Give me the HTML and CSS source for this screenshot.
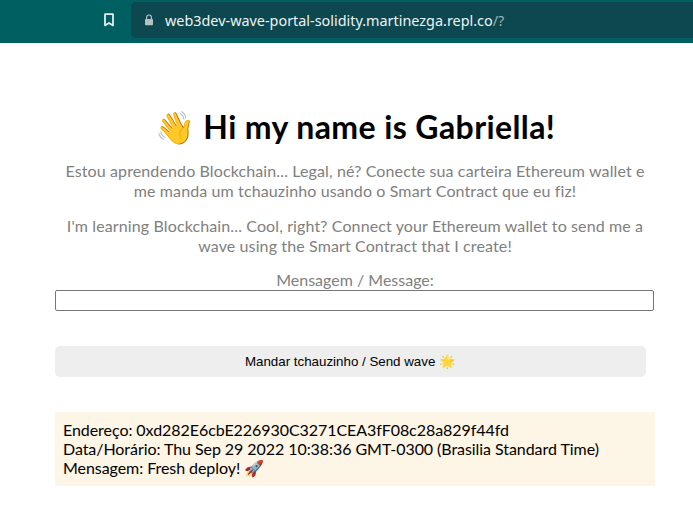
FILE: index.html
```html
<!DOCTYPE html>
<html lang="en">
<head>
    <meta charset="UTF-8">
    <title>Wave Portal</title>
    <meta name="viewport" content="width=device-width, initial-scale=1.0">
    <link rel="stylesheet" href="styles.css">
</head>
<body>

<nav class="toolbar">
    <svg class="bookmark" width="12" height="14" viewBox="0 0 12 14">
        <path d="M2 1.2h8v11.2l-4-2.4-4 2.4z" fill="none" stroke="#e4eeee" stroke-width="1.8" stroke-linejoin="round"/>
    </svg>
    <div class="urlbar">
        <svg class="lock" width="10" height="12" viewBox="0 0 10 12">
            <path d="M2.6 5V3.4a2.4 2.4 0 0 1 4.8 0V5" fill="none" stroke="#b4c0c2" stroke-width="1.2"/>
            <rect x="1" y="5" width="8" height="6.2" rx="1" fill="#b4c0c2"/>
        </svg>
        <span class="host">web3dev-wave-portal-solidity.martinezga.repl.co</span><span class="path">/?</span>
    </div>
</nav>

<div class="container">
    <h1 class="title">👋 Hi my name is Gabriella!</h1>
    <p class="bio">Estou aprendendo Blockchain... Legal, né? Conecte sua carteira Ethereum wallet e me manda um tchauzinho usando o Smart Contract que eu fiz!</p>
    <p class="bio">I'm learning Blockchain... Cool, right? Connect your Ethereum wallet to send me a wave using the Smart Contract that I create!</p>

    <label class="msg-label" for="message">Mensagem / Message:</label>
    <input class="msg-input" id="message" type="text">

    <button class="wave-btn">Mandar tchauzinho / Send wave 🌟</button>

    <div class="wave-card">
        <div>Endereço: 0xd282E6cbE226930C3271CEA3fF08c28a829f44fd</div>
        <div>Data/Horário: Thu Sep 29 2022 10:38:36 GMT-0300 (Brasilia Standard Time)</div>
        <div>Mensagem: Fresh deploy! 🚀</div>
    </div>
</div>

</body>
</html>
```

FILE: styles.css
```css
body {
    margin: 0;
    padding: 0;
    background: #fff;
    font-family: 'Lato', sans-serif;
    color: #000;
    overflow: hidden;
}

.toolbar {
    height: 43px;
    background: #005f61;
    display: flex;
    align-items: flex-start;
    box-sizing: border-box;
    padding-top: 2px;
    padding-left: 103px;
    font-family: 'Noto Sans', sans-serif;
}

.bookmark {
    margin-top: 11px;
    margin-right: 16px;
}

.urlbar {
    flex: 1;
    height: 36px;
    background: #0d474f;
    border-radius: 5px 0 0 5px;
    display: flex;
    align-items: center;
    padding-left: 13px;
    font-size: 14.4px;
}

.lock {
    margin-right: 11px;
}

.host {
    color: #eef3f3;
}

.path {
    color: #9fb2b5;
}

.container {
    width: 600px;
    margin-left: 55px;
    padding-top: 62px;
    text-align: center;
}

.title {
    margin: 0 0 12px;
    font-size: 32px;
    font-weight: 700;
    line-height: 44px;
    letter-spacing: 0.4px;
}

.bio {
    margin: 0 0 16px;
    font-size: 16px;
    line-height: 19.5px;
    letter-spacing: 0.12px;
    color: #808080;
}

.msg-label {
    display: block;
    margin-bottom: 2px;
    font-size: 16px;
    line-height: 17px;
    color: #808080;
}

.msg-input {
    display: block;
    width: 599px;
    height: 21px;
    box-sizing: border-box;
    margin: 0;
    border: 1px solid #767676;
    border-radius: 2px;
    background: #fff;
}

.wave-btn {
    display: block;
    width: 591px;
    height: 31px;
    margin-top: 35px;
    border: none;
    border-radius: 5px;
    background: #eee;
    font-family: 'Liberation Sans', sans-serif;
    font-size: 13.33px;
    color: #000;
}

.wave-card {
    margin-top: 35px;
    padding: 8px 8px 9px;
    background: #fdf5e6;
    text-align: left;
    font-size: 16px;
    line-height: 19px;
    letter-spacing: -0.06px;
}
```
